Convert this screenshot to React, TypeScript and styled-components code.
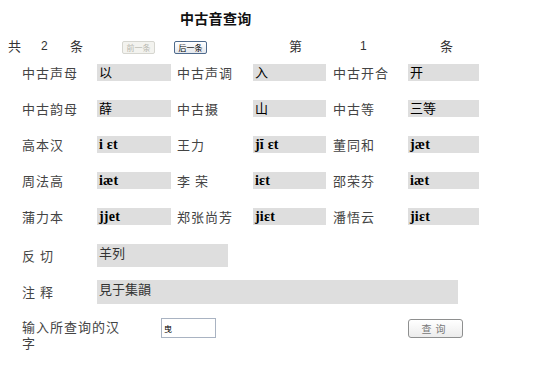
import React from "react";
import styled, { createGlobalStyle } from "styled-components";

const GlobalStyle = createGlobalStyle`
  body {
    margin: 0;
    background: #ffffff;
    font-family: "Noto Sans CJK SC", "DejaVu Sans", sans-serif;
    color: #333333;
  }
`;

const Page = styled.div`
  width: 553px;
  height: 369px;
  overflow: hidden;
`;

const Title = styled.h1`
  margin: 0;
  height: 36px;
  padding-left: 180px;
  font-size: 14px;
  line-height: 36px;
  font-weight: 700;
  color: #111111;
  letter-spacing: 0.3px;
`;

const Pager = styled.div`
  display: grid;
  grid-template-columns: 32px 30px 52px 52px 115px 70px 81px auto;
  align-items: center;
  height: 14px;
  margin-bottom: 4px;
  padding-left: 8px;
  font-size: 13px;
  color: #333333;
`;

const PagerNum = styled.span`
  font-family: "Liberation Sans", "DejaVu Sans", sans-serif;
  font-size: 12px;
  padding-left: 1px;
`;

const PageButton = styled.button<{ $disabled?: boolean }>`
  width: 33px;
  height: 13px;
  padding: 0;
  font-family: "Noto Sans CJK SC", sans-serif;
  font-size: 8px;
  line-height: 11px;
  border-radius: 2px;
  border: 1px solid ${(p) => (p.$disabled ? "#d6d6d0" : "#4e6a8c")};
  background: ${(p) =>
    p.$disabled ? "#f3f3ef" : "linear-gradient(#ffffff, #e4e8ee)"};
  color: ${(p) => (p.$disabled ? "#b8b8b0" : "#000000")};
`;

const InfoGrid = styled.div`
  display: grid;
  grid-template-columns: 75px 74px 82px 73px 82px 71px;
  grid-auto-rows: 36px;
  align-items: center;
  padding-left: 22px;
`;

const Label = styled.div<{ $pad?: number }>`
  padding-left: ${(p) => p.$pad ?? 0}px;
  font-size: 13px;
  letter-spacing: 1px;
  color: #444444;
  white-space: nowrap;
`;

const Field = styled.div<{ $h?: number }>`
  height: ${(p) => p.$h ?? 17}px;
  background: #dedede;
  padding-left: 2px;
  font-family: "Liberation Serif", "Noto Sans CJK SC", serif;
  font-size: 13px;
  line-height: 17px;
  color: #000000;
  overflow: hidden;
  white-space: nowrap;
`;

const IpaField = styled(Field)`
  font-weight: 700;
  font-size: 14px;
  letter-spacing: 0.2px;
`;

const WideRow = styled.div<{ $cols: string; $h: number }>`
  display: grid;
  grid-template-columns: ${(p) => p.$cols};
  height: ${(p) => p.$h}px;
  align-items: center;
  padding-left: 22px;
`;

const CjkField = styled(Field)`
  font-family: "Noto Sans CJK SC", sans-serif;
  color: #333333;
`;

const QueryRow = styled.div`
  display: grid;
  grid-template-columns: 139px 55px 192px 55px;
  align-items: start;
  padding-left: 22px;
  padding-top: 12px;
`;

const QueryLabel = styled.div`
  width: 104px;
  margin-top: 1px;
  font-size: 13px;
  line-height: 16px;
  letter-spacing: 1px;
  color: #444444;
`;

const CharInput = styled.input`
  box-sizing: border-box;
  width: 55px;
  height: 20px;
  margin: 0;
  padding: 1px 2px;
  border: 1px solid #a9b3c2;
  font-family: "Noto Sans CJK SC", sans-serif;
  font-size: 8px;
  line-height: 10px;
  vertical-align: top;
  color: #000000;
  outline: none;
`;

const QueryButton = styled.button`
  box-sizing: border-box;
  width: 55px;
  height: 19px;
  margin-top: 1px;
  padding: 0;
  border: 1px solid #8e8f8f;
  border-radius: 3px;
  background: linear-gradient(#ffffff, #ececec);
  font-family: "Noto Sans CJK SC", sans-serif;
  font-size: 10px;
  letter-spacing: 4px;
  color: #777777;
`;

type Cell = { label: string; value: string; ipa?: boolean };

const rows: Cell[][] = [
  [
    { label: "中古声母", value: "以" },
    { label: "中古声调", value: "入" },
    { label: "中古开合", value: "开" },
  ],
  [
    { label: "中古韵母", value: "薛" },
    { label: "中古摄", value: "山" },
    { label: "中古等", value: "三等" },
  ],
  [
    { label: "高本汉", value: "i ɛt", ipa: true },
    { label: "王力", value: "jĭ ɛt", ipa: true },
    { label: "董同和", value: "jæt", ipa: true },
  ],
  [
    { label: "周法高", value: "iæt", ipa: true },
    { label: "李 荣", value: "iɛt", ipa: true },
    { label: "邵荣芬", value: "iæt", ipa: true },
  ],
  [
    { label: "蒲力本", value: "jjet", ipa: true },
    { label: "郑张尚芳", value: "jiɛt", ipa: true },
    { label: "潘悟云", value: "jiɛt", ipa: true },
  ],
];

const labelPad = [0, 6, 7];

const App: React.FC = () => {
  return (
    <Page>
      <GlobalStyle />
      <Title>中古音查询</Title>
      <Pager>
        <span>共</span>
        <PagerNum>2</PagerNum>
        <span>条</span>
        <span>
          <PageButton $disabled disabled>
            前一条
          </PageButton>
        </span>
        <span>
          <PageButton>后一条</PageButton>
        </span>
        <span>第</span>
        <PagerNum>1</PagerNum>
        <span>条</span>
      </Pager>
      <InfoGrid>
        {rows.map((row) =>
          row.map((cell, i) => (
            <React.Fragment key={cell.label}>
              <Label $pad={labelPad[i]}>{cell.label}</Label>
              {cell.ipa ? (
                <IpaField>{cell.value}</IpaField>
              ) : (
                <Field>{cell.value}</Field>
              )}
            </React.Fragment>
          ))
        )}
      </InfoGrid>
      <WideRow $cols="75px 131px" $h={43}>
        <Label>反 切</Label>
        <CjkField $h={23}>羊列</CjkField>
      </WideRow>
      <WideRow $cols="75px 361px" $h={29}>
        <Label>注 释</Label>
        <CjkField $h={24}>見于集韻</CjkField>
      </WideRow>
      <QueryRow>
        <QueryLabel>输入所查询的汉字</QueryLabel>
        <CharInput defaultValue="曳" />
        <span />
        <QueryButton>查询</QueryButton>
      </QueryRow>
    </Page>
  );
};

export default App;
